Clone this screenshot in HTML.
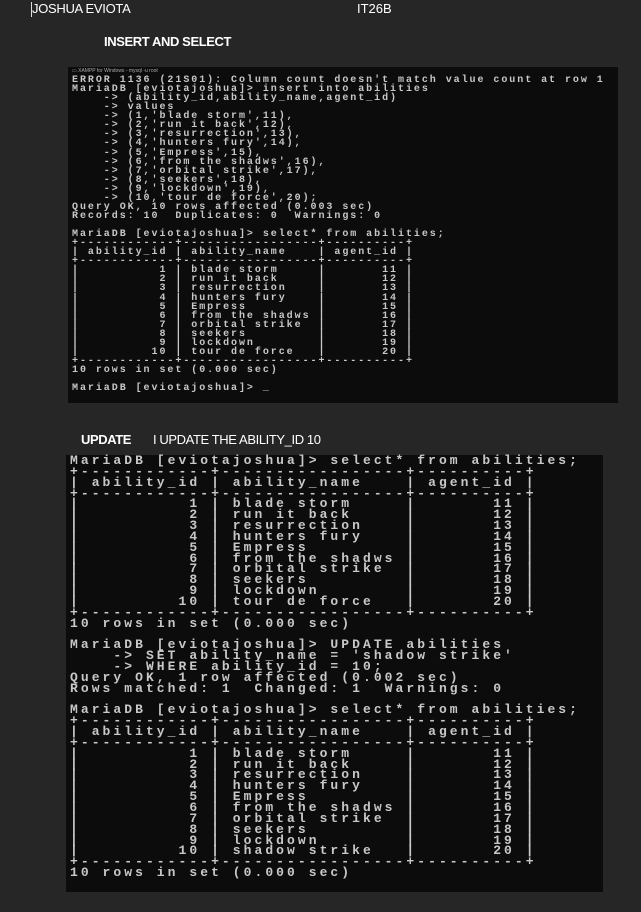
<!DOCTYPE html>
<html><head><meta charset="utf-8"><style>
html,body{margin:0;padding:0;background:#262626;width:641px;height:912px;overflow:hidden;position:relative}
.t{position:absolute;color:#fff;font-family:"Liberation Sans",sans-serif;white-space:nowrap}
.term{position:absolute;background:#0c0c0c}
pre{margin:0;position:absolute;font-family:"Liberation Mono",monospace;color:#c8c8c8;white-space:pre;font-weight:bold}
#p1{left:72px;top:76px;font-size:10px;line-height:9.07px;letter-spacing:1.95px}
#p2{left:70px;top:456px;font-size:13px;line-height:10.85px;letter-spacing:3.05px}
</style></head><body>
<div class="t" style="left:32px;top:1px;font-size:13px;letter-spacing:-0.3px">JOSHUA EVIOTA</div>
<div style="position:absolute;left:31px;top:2px;width:1px;height:15px;background:#ddd"></div>
<div class="t" style="left:357px;top:1px;font-size:13px">IT26B</div>
<div class="t" style="left:104px;top:34px;font-size:13px;font-weight:bold;letter-spacing:-0.4px">INSERT AND SELECT</div>

<div class="term" style="left:68px;top:67px;width:550px;height:336px"></div>
<div class="t" style="left:72px;top:68px;font-size:5px;color:#aaa">▭ XAMPP for Windows - mysql -u root</div>
<pre id="p1">ERROR 1136 (21S01): Column count doesn't match value count at row 1
MariaDB [eviotajoshua]> insert into abilities
    -> (ability_id,ability_name,agent_id)
    -> values
    -> (1,'blade storm',11),
    -> (2,'run it back',12),
    -> (3,'resurrection',13),
    -> (4,'hunters fury',14),
    -> (5,'Empress',15),
    -> (6,'from the shadws',16),
    -> (7,'orbital strike',17),
    -> (8,'seekers',18),
    -> (9,'lockdown',19),
    -> (10,'tour de force',20);
Query OK, 10 rows affected (0.003 sec)
Records: 10  Duplicates: 0  Warnings: 0

MariaDB [eviotajoshua]> select* from abilities;
+------------+-----------------+----------+
| ability_id | ability_name    | agent_id |
+------------+-----------------+----------+
|          1 | blade storm     |       11 |
|          2 | run it back     |       12 |
|          3 | resurrection    |       13 |
|          4 | hunters fury    |       14 |
|          5 | Empress         |       15 |
|          6 | from the shadws |       16 |
|          7 | orbital strike  |       17 |
|          8 | seekers         |       18 |
|          9 | lockdown        |       19 |
|         10 | tour de force   |       20 |
+------------+-----------------+----------+
10 rows in set (0.000 sec)

MariaDB [eviotajoshua]> _</pre>

<div class="t" style="left:81px;top:432px;font-size:13px;font-weight:bold;letter-spacing:-0.4px">UPDATE</div>
<div class="t" style="left:153px;top:432px;font-size:13px;letter-spacing:-0.4px">I UPDATE THE ABILITY_ID 10</div>

<div class="term" style="left:66px;top:455px;width:537px;height:437px"></div>
<pre id="p2">MariaDB [eviotajoshua]> select* from abilities;
+------------+-----------------+----------+
| ability_id | ability_name    | agent_id |
+------------+-----------------+----------+
|          1 | blade storm     |       11 |
|          2 | run it back     |       12 |
|          3 | resurrection    |       13 |
|          4 | hunters fury    |       14 |
|          5 | Empress         |       15 |
|          6 | from the shadws |       16 |
|          7 | orbital strike  |       17 |
|          8 | seekers         |       18 |
|          9 | lockdown        |       19 |
|         10 | tour de force   |       20 |
+------------+-----------------+----------+
10 rows in set (0.000 sec)

MariaDB [eviotajoshua]> UPDATE abilities
    -> SET ability_name = 'shadow strike'
    -> WHERE ability_id = 10;
Query OK, 1 row affected (0.002 sec)
Rows matched: 1  Changed: 1  Warnings: 0

MariaDB [eviotajoshua]> select* from abilities;
+------------+-----------------+----------+
| ability_id | ability_name    | agent_id |
+------------+-----------------+----------+
|          1 | blade storm     |       11 |
|          2 | run it back     |       12 |
|          3 | resurrection    |       13 |
|          4 | hunters fury    |       14 |
|          5 | Empress         |       15 |
|          6 | from the shadws |       16 |
|          7 | orbital strike  |       17 |
|          8 | seekers         |       18 |
|          9 | lockdown        |       19 |
|         10 | shadow strike   |       20 |
+------------+-----------------+----------+
10 rows in set (0.000 sec)</pre>
</body></html>
